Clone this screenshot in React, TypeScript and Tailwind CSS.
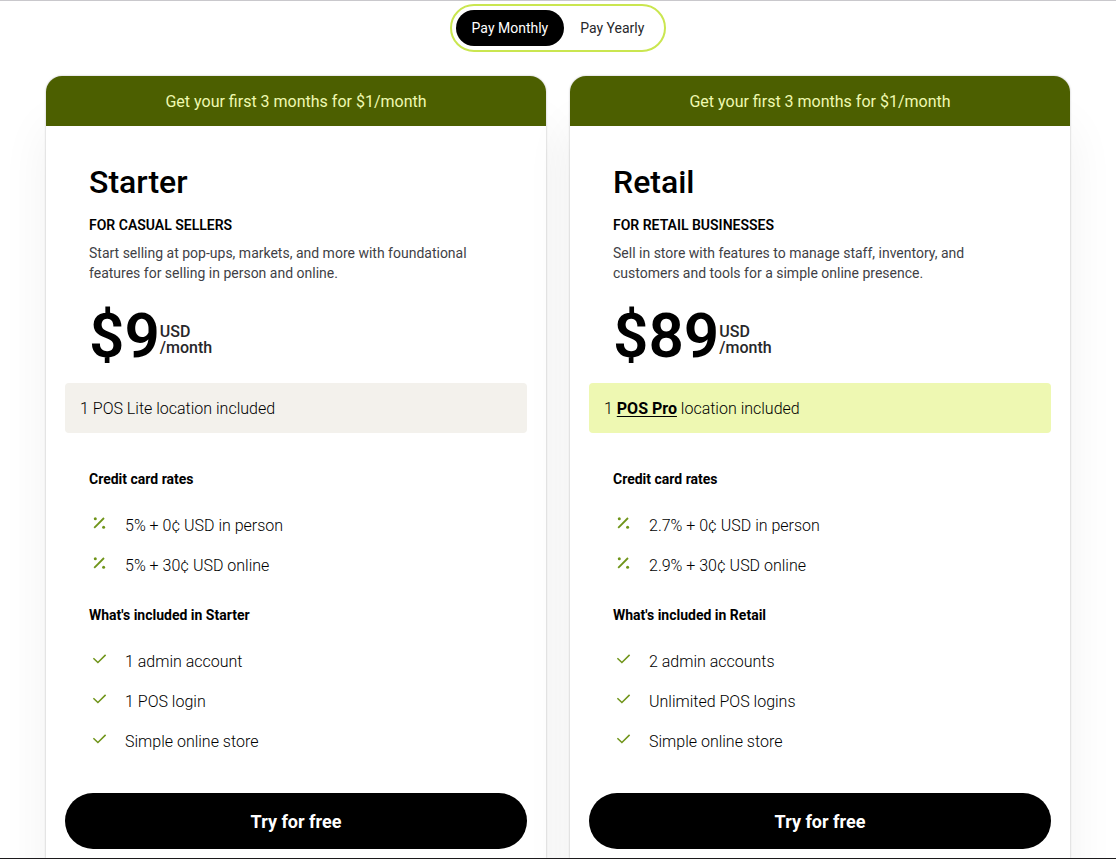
import { useState } from "react";
import type { ReactNode } from "react";

type Plan = {
  name: string;
  audience: string;
  description: string;
  price: string;
  location: ReactNode;
  highlight: boolean;
  rates: string[];
  included: string[];
};

const plans: Plan[] = [
  {
    name: "Starter",
    audience: "FOR CASUAL SELLERS",
    description:
      "Start selling at pop-ups, markets, and more with foundational features for selling in person and online.",
    price: "$9",
    location: "1 POS Lite location included",
    highlight: false,
    rates: ["5% + 0¢ USD in person", "5% + 30¢ USD online"],
    included: ["1 admin account", "1 POS login", "Simple online store"],
  },
  {
    name: "Retail",
    audience: "FOR RETAIL BUSINESSES",
    description:
      "Sell in store with features to manage staff, inventory, and customers and tools for a simple online presence.",
    price: "$89",
    location: (
      <>
        1{" "}
        <a href="#pos-pro" className="font-bold underline underline-offset-2">
          POS Pro
        </a>{" "}
        location included
      </>
    ),
    highlight: true,
    rates: ["2.7% + 0¢ USD in person", "2.9% + 30¢ USD online"],
    included: ["2 admin accounts", "Unlimited POS logins", "Simple online store"],
  },
];

function PercentIcon() {
  return (
    <svg viewBox="0 0 20 20" className="size-5 shrink-0 text-[#6f9419]" aria-hidden="true">
      <path d="M5.2 14.8 15 5" stroke="currentColor" strokeWidth="1.8" fill="none" />
      <circle cx="6.3" cy="5.7" r="1.5" fill="currentColor" />
      <circle cx="14.6" cy="14.2" r="1.5" fill="currentColor" />
    </svg>
  );
}

function CheckIcon() {
  return (
    <svg viewBox="0 0 20 20" className="size-5 shrink-0 text-[#6f9419]" aria-hidden="true">
      <path d="M4.4 9.2 8.9 13.5 16.6 5.9" stroke="currentColor" strokeWidth="1.5" fill="none" />
    </svg>
  );
}

function FeatureList({ title, items, icon }: { title: string; items: string[]; icon: ReactNode }) {
  return (
    <section className="px-6">
      <h3 className="text-sm leading-5 font-bold">{title}</h3>
      <ul className="mt-6 flex flex-col gap-3.5">
        {items.map((item) => (
          <li key={item} className="flex gap-4 text-base leading-[26px] font-light">
            {icon}
            <span>{item}</span>
          </li>
        ))}
      </ul>
    </section>
  );
}

function PlanCard({ plan }: { plan: Plan }) {
  return (
    <article className="flex flex-1 flex-col rounded-t-2xl bg-white shadow-[0_0_2px_rgba(0,0,0,0.3),0_50px_50px_rgba(0,0,0,0.06)]">
      <p className="rounded-t-2xl bg-[#4c5f00] pt-3.5 pb-3 text-center text-base leading-6 text-[#eff9b0]">
        Get your first 3 months for $1/month
      </p>
      <div className="flex flex-1 flex-col px-[19px] pt-[38px] pb-[9px]">
        <div className="px-6">
          <h2 className="text-[32px] leading-9 font-medium">{plan.name}</h2>
          <p className="mt-[15px] text-sm leading-5 font-semibold">{plan.audience}</p>
          <p className="mt-2 text-sm leading-5 text-[#3f3f46]">{plan.description}</p>
          <div className="mt-[23px] flex items-center">
            <span className="text-[62px] leading-[60px] font-semibold">{plan.price}</span>
            <span className="pt-2 text-base leading-4 font-medium text-[#27272a]">
              USD
              <br />
              /month
            </span>
          </div>
        </div>
        <p
          className={`mt-[17px] mb-9 rounded px-[15px] pt-3.5 pb-3 text-base leading-6 font-light ${
            plan.highlight ? "bg-[#eef8b2]" : "bg-[#f3f1ec]"
          }`}
        >
          {plan.location}
        </p>
        <div className="flex flex-col gap-[26px]">
          <FeatureList title="Credit card rates" items={plan.rates} icon={<PercentIcon />} />
          <FeatureList title={`What's included in ${plan.name}`} items={plan.included} icon={<CheckIcon />} />
        </div>
        <button type="button" className="mt-[38px] h-14 rounded-full bg-black pt-0.5 text-lg font-bold text-white">
          Try for free
        </button>
      </div>
    </article>
  );
}

export default function App() {
  const [period, setPeriod] = useState("Pay Monthly");

  return (
    <main className="overflow-hidden border-t border-b border-t-[#c9c8cc] border-b-[#1c1a1c] bg-white pt-[3px] font-['Roboto',sans-serif] text-black">
      <div className="mx-auto flex w-fit rounded-full border-2 border-[#cae650] p-1">
        {["Pay Monthly", "Pay Yearly"].map((option) => (
          <button
            key={option}
            type="button"
            aria-pressed={period === option}
            onClick={() => setPeriod(option)}
            className={`h-9 rounded-full px-4 text-sm ${
              period === option ? "bg-black text-white" : "text-[#27272a]"
            }`}
          >
            {option}
          </button>
        ))}
      </div>
      <div className="mx-auto mt-6 flex max-w-5xl gap-6">
        {plans.map((plan) => (
          <PlanCard key={plan.name} plan={plan} />
        ))}
      </div>
    </main>
  );
}
